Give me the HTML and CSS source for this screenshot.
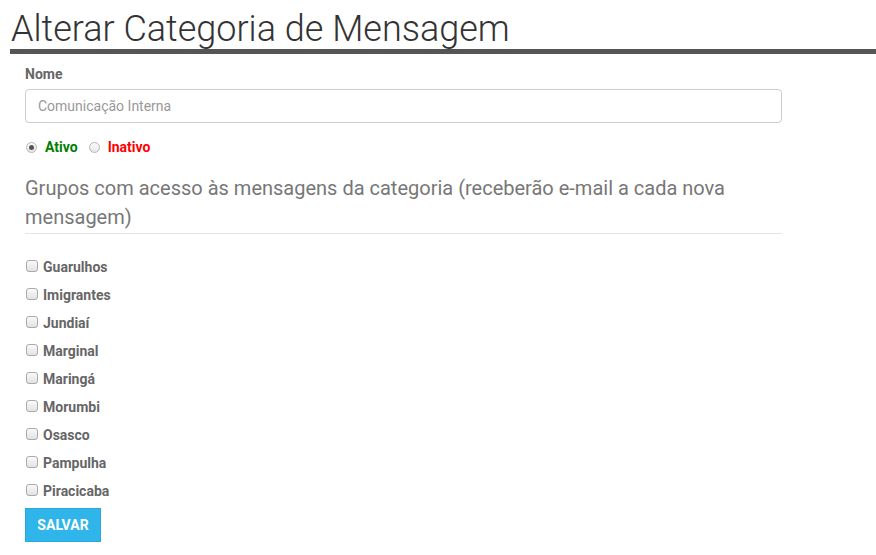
FILE: index.html
```html
<!DOCTYPE html>
<html lang="pt-BR">
<head>
  <meta charset="UTF-8">
  <meta name="viewport" content="width=device-width, initial-scale=1.0">
  <title>Alterar Categoria de Mensagem</title>
  <link rel="stylesheet" href="styles.css">
</head>
<body>
  <h1 class="page-title">Alterar Categoria de Mensagem</h1>
  <form class="form">
    <label class="field-label" for="nome">Nome</label>
    <input id="nome" class="field-input" type="text" placeholder="Comunicação Interna">

    <div class="status">
      <label class="status-option"><input type="radio" name="status" checked> <span class="ativo">Ativo</span></label>
      <label class="status-option"><input type="radio" name="status"> <span class="inativo">Inativo</span></label>
    </div>

    <h4 class="section-title">Grupos com acesso às mensagens da categoria (receberão e-mail a cada nova mensagem)</h4>

    <div class="groups">
      <label class="group"><input type="checkbox"> Guarulhos</label>
      <label class="group"><input type="checkbox"> Imigrantes</label>
      <label class="group"><input type="checkbox"> Jundiaí</label>
      <label class="group"><input type="checkbox"> Marginal</label>
      <label class="group"><input type="checkbox"> Maringá</label>
      <label class="group"><input type="checkbox"> Morumbi</label>
      <label class="group"><input type="checkbox"> Osasco</label>
      <label class="group"><input type="checkbox"> Pampulha</label>
      <label class="group"><input type="checkbox"> Piracicaba</label>
    </div>

    <button class="btn-save" type="button">Salvar</button>
  </form>
</body>
</html>
```

FILE: styles.css
```css
body {
  margin: 0;
  font-family: Roboto, 'Liberation Sans', Arial, sans-serif;
  color: #555;
  background: #fff;
}
.page-title {
  margin: 10px 0 0 10px;
  padding-left: 1px;
  font-size: 36px;
  font-weight: 300;
  line-height: 39px;
  color: #333;
  border-bottom: 5px solid #555;
}
.form {
  padding: 0 94px 0 25px;
}
.field-label {
  display: block;
  margin-top: 10px;
  margin-bottom: 5px;
  font-size: 14px;
  font-weight: bold;
  line-height: 20px;
  color: #666;
}
.field-input {
  display: block;
  width: 100%;
  height: 34px;
  padding: 6px 12px;
  box-sizing: border-box;
  font-family: inherit;
  font-size: 14px;
  border: 1px solid #ccc;
  border-radius: 4px;
}
.field-input::placeholder {
  color: #999;
}
.status {
  display: flex;
  gap: 10px;
  margin-top: 14px;
  font-size: 14px;
  font-weight: bold;
  line-height: 20px;
}
.status-option {
  display: flex;
  align-items: center;
}

/* radios e checkboxes com aparência cinza */
.status-option input {
  appearance: none;
  -webkit-appearance: none;
  position: relative;
  margin: 0 8px 0 1px;
  width: 11px;
  height: 11px;
  border: 1px solid #b5b5b5;
  border-radius: 50%;
  background: linear-gradient(#fcfcfc, #e6e6e6);
  box-sizing: border-box;
}
.status-option input:checked::after {
  content: "";
  position: absolute;
  left: 2px;
  top: 2px;
  width: 5px;
  height: 5px;
  border-radius: 50%;
  background: #555;
}
.ativo {
  color: #008000;
}
.inativo {
  color: #f00;
}
.section-title {
  margin: 17px 0 0;
  padding-bottom: 1px;
  font-size: 20px;
  font-weight: normal;
  line-height: 29px;
  color: #777;
  border-bottom: 1px solid #e5e5e5;
}
.groups {
  margin-top: 23px;
}
.group {
  display: flex;
  align-items: center;
  margin-bottom: 8px;
  font-size: 14px;
  font-weight: bold;
  line-height: 20px;
  color: #666;
}
.group input {
  appearance: none;
  -webkit-appearance: none;
  margin: -2px 5px 0 1px;
  width: 12px;
  height: 12px;
  border: 1px solid #aaa;
  border-radius: 3px;
  background: linear-gradient(#fafafa, #e2e2e2);
  box-sizing: border-box;
}
.btn-save {
  display: block;
  margin-top: -1px;
  width: 76px;
  height: 34px;
  padding: 0;
  font-family: inherit;
  font-size: 14px;
  font-weight: bold;
  text-transform: uppercase;
  color: #fff;
  background-color: #2fb5e9;
  border: 1px solid #27a9dd;
  cursor: pointer;
}
```
